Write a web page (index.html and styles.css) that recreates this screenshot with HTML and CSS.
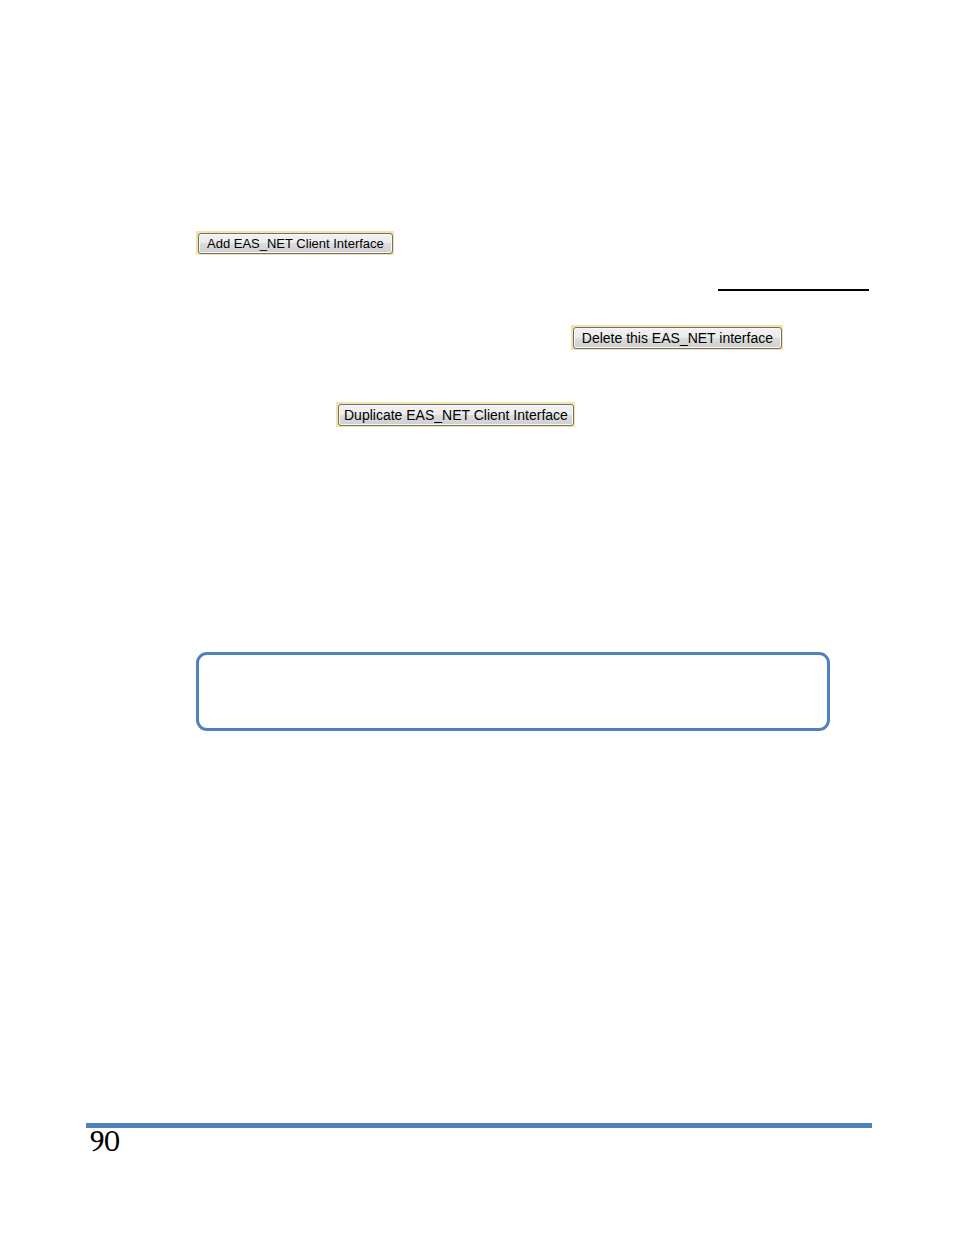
FILE: index.html
```html
<!DOCTYPE html>
<html lang="en">
<head>
<meta charset="utf-8">
<title>EAS_NET Client Interface</title>
<link rel="stylesheet" href="styles.css">
</head>
<body>
<div class="page">
  <main class="content">
    <div class="row row-add"><span class="frame"><button class="btn btn-small" type="button">Add EAS_NET Client Interface</button></span></div>
    <div class="rule"></div>
    <div class="row row-delete"><span class="frame"><button class="btn" type="button">Delete this EAS_NET interface</button></span></div>
    <div class="row row-duplicate"><span class="frame"><button class="btn btn-tight" type="button">Duplicate EAS_NET Client Interface</button></span></div>
    <div class="note"></div>
  </main>
  <footer class="footer">90</footer>
</div>
</body>
</html>
```
FILE: styles.css
```css
* {
  box-sizing: border-box;
}

body {
  margin: 0;
  background: #fff;
  color: #000;
}

.page {
  display: flex;
  flex-direction: column;
  min-height: 100vh;
  padding: 231px 82px 79px 86px;
}

.content {
  display: flex;
  flex: 1;
  flex-direction: column;
}

.row {
  display: flex;
}

.row-add {
  padding-left: 110px;
}

.rule {
  align-self: flex-end;
  width: 151px;
  height: 2px;
  margin: 34px 3px 34px 0;
  background: #000;
}

.row-delete {
  justify-content: flex-end;
  padding-right: 89px;
}

.row-duplicate {
  margin-top: 52px;
  padding-left: 250px;
}

.frame {
  display: flex;
  padding: 2px 1px 1px 2px;
  background: #f3e3a8;
}

.btn {
  height: 22px;
  padding: 0 8px;
  border: 1px solid #707070;
  border-radius: 3px;
  background: linear-gradient(#f2f2f2 0%, #ebebeb 50%, #dddddd 50%, #cfcfcf 100%);
  box-shadow: inset 0 0 0 1px #f8f8f8;
  color: #000;
  font: 14px/20px "Liberation Sans", Arial, sans-serif;
  white-space: nowrap;
}

.btn-small {
  height: 21px;
  font-size: 13px;
  line-height: 19px;
}

.btn-tight {
  padding: 0 5px;
}

.note {
  height: 79px;
  margin: 225px 42px 0 110px;
  border: 3px solid #4f81bd;
  border-radius: 11px;
}

.footer {
  padding-left: 4px;
  border-top: 5px solid #4f81bd;
  font: 30px/28px Cambria, "Liberation Serif", serif;
}
```
